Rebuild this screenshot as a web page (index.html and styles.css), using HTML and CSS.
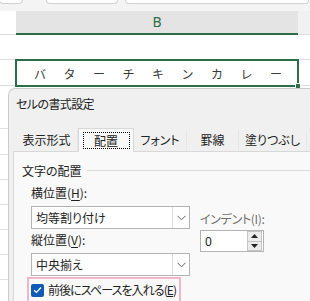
FILE: index.html
```html
<!DOCTYPE html>
<html lang="ja">
<head>
<meta charset="utf-8">
<link rel="stylesheet" href="styles.css">
</head>
<body>
<div class="sheet">
  <div class="topbar">
    <div class="wtab t1"></div>
    <div class="wtab t2"></div>
    <div class="wtab t3"></div>
  </div>
  <div class="hrow">
    <div class="rh"></div>
    <div class="colhead">B</div>
    <div class="rest head-rest"></div>
  </div>
  <div class="row r1">
    <div class="rh"></div>
    <div class="cell"></div>
    <div class="rest"></div>
  </div>
  <div class="row r2">
    <div class="rh"></div>
    <div class="cell selected">
      <span>バ</span><span>タ</span><span>ー</span><span>チ</span><span>キ</span><span>ン</span><span>カ</span><span>レ</span><span>ー</span>
      <i class="handle"></i>
    </div>
    <div class="rest"></div>
  </div>
  <div class="row r3"><div class="rh"></div></div>
  <div class="row r4"><div class="rh"></div></div>
  <div class="row r5"><div class="rh"></div></div>
  <div class="row r5"><div class="rh"></div></div>
  <div class="row r5"><div class="rh"></div></div>
  <div class="row r5"><div class="rh"></div></div>
  <div class="row r5"><div class="rh"></div></div>
  <div class="row r5"><div class="rh"></div></div>
</div>

<div class="dialog">
  <div class="title">セルの書式設定</div>
  <div class="body">
    <div class="tabs">
      <div class="tab w1">表示形式</div>
      <div class="tab w2 active"><span class="focus">配置</span></div>
      <div class="tab w3">フォント</div>
      <div class="tab w4">罫線</div>
      <div class="tab w5">塗りつぶし</div>
    </div>
    <div class="panel">
      <div class="group"><span>文字の配置</span><i class="gline"></i></div>
      <div class="cols">
        <div class="leftcol">
          <div class="label">横位置(<u>H</u>):</div>
          <div class="select">
            <span class="val">均等割り付け</span>
            <span class="dd"><svg width="9" height="6" viewBox="0 0 9 6"><path d="M0.5 0.8 L4.5 4.8 L8.5 0.8" fill="none" stroke="#606060" stroke-width="1"/></svg></span>
          </div>
          <div class="label">縦位置(<u>V</u>):</div>
          <div class="select">
            <span class="val">中央揃え</span>
            <span class="dd"><svg width="9" height="6" viewBox="0 0 9 6"><path d="M0.5 0.8 L4.5 4.8 L8.5 0.8" fill="none" stroke="#606060" stroke-width="1"/></svg></span>
          </div>
          <div class="checkrow">
            <span class="cb"><svg width="9" height="8" viewBox="0 0 9 8"><path d="M1 4.2 L3.4 6.5 L8 1.5" fill="none" stroke="#fff" stroke-width="1.2"/></svg></span>
            <span class="cblabel">前後にスペースを入れる(<u>E</u>)</span>
          </div>
        </div>
        <div class="rightcol">
          <div class="label dim">インデント(I):</div>
          <div class="spin">
            <span class="val">0</span>
            <span class="btns">
              <span class="sb"><svg width="7" height="4" viewBox="0 0 7 4"><path d="M0 4 L3.5 0 L7 4 Z" fill="#222"/></svg></span>
              <span class="sb"><svg width="7" height="4" viewBox="0 0 7 4"><path d="M0 0 L3.5 4 L7 0 Z" fill="#222"/></svg></span>
            </span>
          </div>
        </div>
      </div>
    </div>
  </div>
</div>
</body>
</html>
```

FILE: styles.css
```css
* { box-sizing: border-box; }
html, body {
  margin: 0;
  padding: 0;
  width: 310px;
  height: 301px;
  overflow: hidden;
  background: #ffffff;
  font-family: "Noto Sans CJK JP", "Noto Sans", sans-serif;
  color: #222222;
}
body { position: relative; }

.sheet { width: 310px; height: 301px; overflow: hidden; }

.topbar {
  height: 11px;
  background: #f4f4f4;
  display: flex;
  align-items: flex-start;
  overflow: hidden;
}
.wtab {
  height: 4px;
  background: #ffffff;
  border: 1px solid #d2d2d2;
  border-top: none;
  border-radius: 0 0 4px 4px;
  flex: none;
}
.t1 { width: 24px; margin-left: -1px; }
.t2 { width: 72px; margin-left: 23px; }
.t3 { width: 184px; margin-left: 7px; }

.hrow, .row {
  display: flex;
}
.rh {
  width: 16px;
  flex: none;
  border-bottom: 1px solid #dedede;
}
.hrow { height: 24px; }
.colhead {
  width: 282px;
  flex: none;
  background: #e4e4e4;
  border-bottom: 2px solid #2a6f47;
  color: #2a6f47;
  font-family: "Noto Sans", sans-serif;
  font-size: 14px;
  line-height: 22px;
  text-align: center;
}
.rest {
  flex: 1;
  border-bottom: 1px solid #dedede;
}
.head-rest { background: #f1f1f1; }

.r1 { height: 25px; }
.r2 { height: 26px; }
.r3 { height: 43px; }
.r4 { height: 26px; }
.r5 { height: 25px; }
.cell {
  width: 282px;
  flex: none;
  border-bottom: 1px solid #e4e4e4;
}
.selected {
  position: relative;
  height: 28px;
  width: 284px;
  margin: -1px -1px 0 -1px;
  border: 2px solid #2a6f47;
  display: flex;
  justify-content: space-between;
  align-items: center;
  padding: 0 15px 0 17px;
  font-size: 12px;
  color: #3a3a3a;
  z-index: 1;
}
.handle {
  position: absolute;
  right: -4px;
  bottom: -4px;
  width: 6px;
  height: 6px;
  background: #2a6f47;
  border: 1px solid #ffffff;
}
.r3 .rh, .r4 .rh, .r5 .rh { border-bottom: 1px solid #e0e0e0; }

.dialog {
  position: absolute;
  left: 8px;
  top: 88px;
  width: 302px;
  height: 213px;
  overflow: hidden;
  background: #f0f0f0;
  border: 1px solid #cbcbcb;
  border-right: none;
  border-bottom: none;
  border-top-left-radius: 7px;
  z-index: 5;
  font-size: 12px;
  font-feature-settings: "palt";
}
.title {
  height: 30px;
  line-height: 30px;
  padding-left: 7px;
  margin-bottom: 9px;
  letter-spacing: -0.6px;
}
.body { padding-left: 4px; }
.tabs {
  display: flex;
  align-items: flex-end;
  height: 23px;
  margin-left: 3px;
  position: relative;
  z-index: 2;
}
.tab {
  height: 21px;
  line-height: 20px;
  text-align: center;
  border-right: 1px solid #e6e6e6;
  flex: none;
}
.w1 { width: 62px; }
.w2 { width: 56px; }
.w3 { width: 53px; }
.w4 { width: 52px; }
.w5 { width: 68px; }
.tab.active {
  height: 24px;
  margin-bottom: -1px;
  background: #f9f9f9;
  border: 1px solid #d8d8d8;
  border-bottom: none;
  padding-top: 2px;
}
.focus {
  display: inline-block;
  width: 47px;
  height: 17px;
  line-height: 15px;
  border: 1px dotted #000;
}
.panel {
  background: #f9f9f9;
  border: 1px solid #d8d8d8;
  border-right: none;
  border-bottom: none;
  height: 150px;
  padding-top: 8px;
  padding-left: 8px;
}
.group {
  display: flex;
  align-items: center;
  height: 22px;
  line-height: 22px;
}
.gline {
  flex: 1;
  height: 1px;
  background: #dcdcdc;
  margin-left: 5px;
  margin-top: -2px;
}
.cols {
  display: flex;
  padding-left: 9px;
}
.leftcol { width: 159px; flex: none; }
.rightcol { margin-left: 10px; margin-top: 26px; }
.label {
  height: 22px;
  line-height: 22px;
}
.label.dim { color: #707070; letter-spacing: -0.3px; }
.label u { text-underline-offset: 2px; }
.select {
  height: 23px;
  margin-top: 2px;
  background: #ffffff;
  border: 1px solid #b4b4b4;
  display: flex;
  align-items: center;
}
.select .val {
  flex: 1;
  padding-left: 4px;
  line-height: 21px;
}
.dd {
  width: 17px;
  height: 21px;
  border-left: 1px solid #dcdcdc;
  display: flex;
  align-items: center;
  justify-content: center;
}
.checkrow {
  margin-top: 1px;
  margin-left: -4px;
  width: 154px;
  height: 26px;
  border: 2px solid #f2b6cc;
  display: flex;
  align-items: center;
  padding-left: 2px;
}
.cb {
  width: 13px;
  height: 13px;
  background: #0f5bb5;
  border-radius: 2px;
  display: flex;
  align-items: center;
  justify-content: center;
  flex: none;
}
.cblabel {
  margin-left: 4px;
  white-space: nowrap;
  line-height: 20px;
  letter-spacing: -0.9px;
}
.spin {
  width: 64px;
  height: 22px;
  background: #ffffff;
  border: 1px solid #b4b4b4;
  display: flex;
  align-items: center;
}
.spin .val {
  flex: 1;
  padding-left: 4px;
  font-family: "Noto Sans", sans-serif;
}
.btns {
  display: flex;
  flex-direction: column;
  width: 15px;
  height: 20px;
  margin-right: 1px;
}
.sb {
  flex: 1;
  background: #ececec;
  border: 1px solid #c4c4c4;
  display: flex;
  align-items: center;
  justify-content: center;
}
.sb + .sb { border-top: none; }
```
